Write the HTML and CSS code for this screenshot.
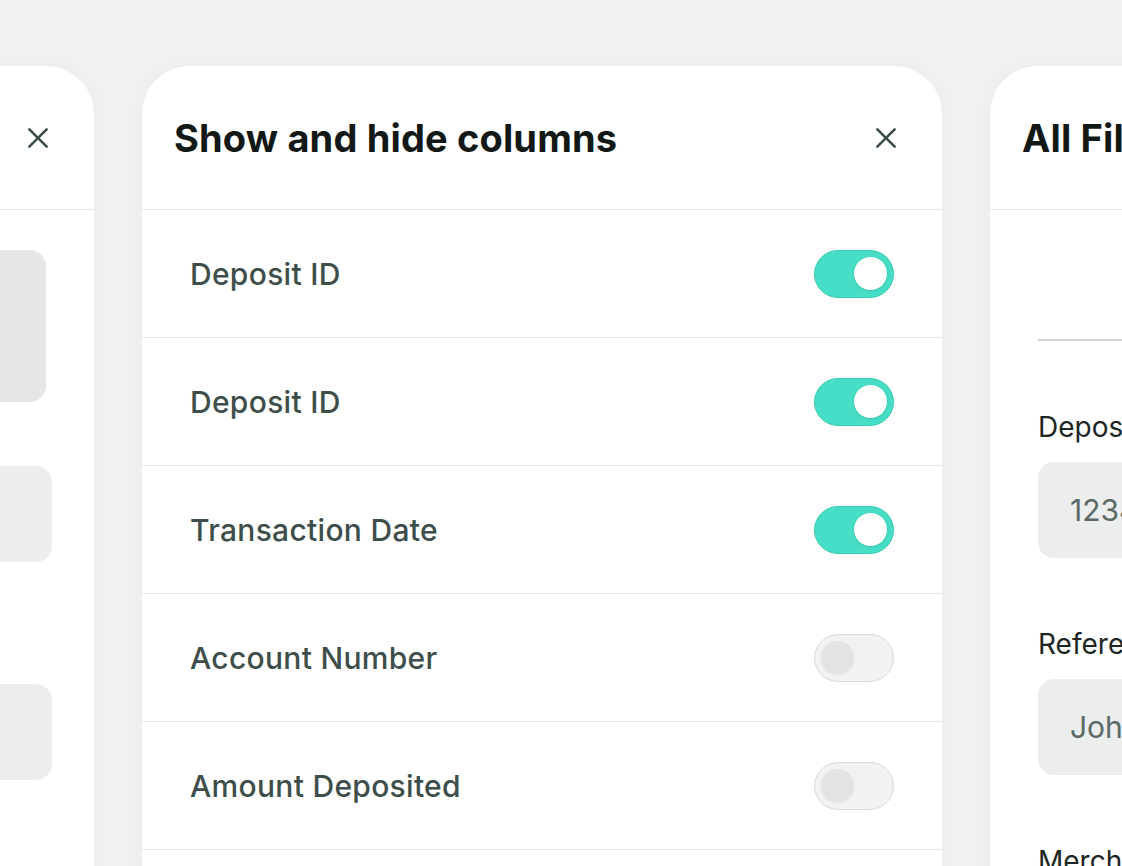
FILE: index.html
```html
<!DOCTYPE html>
<html lang="en">
<head>
<meta charset="utf-8">
<title>Show and hide columns</title>
<link rel="stylesheet" href="styles.css">
</head>
<body>
<div class="stage">
  <section class="panel panel-left">
    <header class="panel-head head-end">
      <button class="close" aria-label="Close">
        <svg viewBox="0 0 24 24" width="26" height="26"><path d="M4 4L20 20M20 4L4 20" /></svg>
      </button>
    </header>
    <div class="left-body">
      <div class="ghost ghost-tall"></div>
      <div class="ghost ghost-mid"></div>
      <div class="ghost ghost-low"></div>
    </div>
  </section>

  <section class="panel panel-main">
    <header class="panel-head">
      <h2 class="title">Show and hide columns</h2>
      <button class="close" aria-label="Close">
        <svg viewBox="0 0 24 24" width="26" height="26"><path d="M4 4L20 20M20 4L4 20" /></svg>
      </button>
    </header>
    <ul class="rows">
      <li class="row"><span class="label">Deposit ID</span><span class="toggle on"><span class="knob"></span></span></li>
      <li class="row"><span class="label">Deposit ID</span><span class="toggle on"><span class="knob"></span></span></li>
      <li class="row"><span class="label">Transaction Date</span><span class="toggle on"><span class="knob"></span></span></li>
      <li class="row"><span class="label">Account Number</span><span class="toggle"><span class="knob"></span></span></li>
      <li class="row"><span class="label">Amount Deposited</span><span class="toggle"><span class="knob"></span></span></li>
      <li class="row"><span class="label">Merchant Name</span><span class="toggle"><span class="knob"></span></span></li>
    </ul>
  </section>

  <section class="panel panel-right">
    <header class="panel-head">
      <h2 class="title">All Filters</h2>
    </header>
    <div class="filters">
      <div class="tabline"></div>
      <div class="field">
        <label class="field-label">Deposit ID</label>
        <div class="input">1234567890</div>
      </div>
      <div class="field">
        <label class="field-label">Reference</label>
        <div class="input">John Doe</div>
      </div>
      <div class="field">
        <label class="field-label">Merchant Name</label>
        <div class="input">Merchant</div>
      </div>
    </div>
  </section>
</div>
</body>
</html>
```

FILE: styles.css
```css
* { box-sizing: border-box; }

html, body {
  margin: 0;
  padding: 0;
  height: 100%;
  overflow: hidden;
}

body {
  background: #f1f2f1;
  font-family: Inter, "Noto Sans", sans-serif;
  color: #3d4e4b;
}

.stage {
  display: flex;
  gap: 48px;
  padding-top: 66px;
  margin-left: -706px;
  width: 2600px;
}

.panel {
  flex: 0 0 800px;
  height: 900px;
  background: #ffffff;
  border-radius: 48px 48px 0 0;
  box-shadow: 0 0 24px rgba(60, 80, 75, 0.05);
}

.panel-head {
  height: 144px;
  display: flex;
  align-items: center;
  justify-content: space-between;
  padding: 0 43px 0 32px;
  border-bottom: 1px solid #e3e6e5;
}

.head-end { justify-content: flex-end; }

.title {
  margin: 0;
  font-size: 38px;
  font-weight: 700;
  letter-spacing: 0.15px;
  color: #121816;
  white-space: nowrap;
}

.close {
  border: 0;
  background: none;
  padding: 0;
  width: 26px;
  height: 26px;
  display: flex;
  cursor: pointer;
}

.close svg path {
  stroke: #3d4e4b;
  stroke-width: 2.4;
  stroke-linecap: round;
  fill: none;
}

/* left (background) panel */
.left-body {
  display: flex;
  flex-direction: column;
  align-items: flex-end;
  padding-top: 40px;
}

.ghost {
  background: #ebeeed;
  border-radius: 16px;
  width: 300px;
}

.ghost-tall {
  height: 152px;
  margin-right: 48px;
  background: #e4e7e6;
}

.ghost-mid {
  height: 96px;
  margin-top: 64px;
  margin-right: 42px;
}

.ghost-low {
  height: 96px;
  margin-top: 122px;
  margin-right: 42px;
}

/* column list */
.rows {
  list-style: none;
  margin: 0;
  padding: 0;
}

.row {
  height: 128px;
  display: flex;
  align-items: center;
  justify-content: space-between;
  padding: 0 48px 0 48px;
  border-bottom: 1px solid #e3e6e5;
}

.label {
  font-size: 30px;
  font-weight: 500;
  color: #3d4e4b;
  letter-spacing: 0.3px;
}

.toggle {
  width: 80px;
  height: 48px;
  border-radius: 24px;
  background: #f1f2f1;
  border: 1.5px solid #d6dad9;
  display: flex;
  align-items: center;
  padding: 0 6px;
}

.knob {
  width: 33px;
  height: 33px;
  border-radius: 50%;
  background: #e1e4e3;
  box-shadow: 0 1px 3px rgba(0, 0, 0, 0.06);
}

.toggle.on {
  background: #46dec6;
  border-color: #3ccab3;
  justify-content: flex-end;
}

.toggle.on .knob {
  background: #ffffff;
  box-shadow: 0 1px 3px rgba(0, 0, 0, 0.12);
}

/* right panel */
.filters {
  padding: 0 0 0 48px;
}

.tabline {
  margin-top: 129px;
  height: 2px;
  background: #cfd4d3;
}

.field {
  display: flex;
  flex-direction: column;
}

.field-label {
  margin-top: 70px;
  font-size: 28px;
  font-weight: 400;
  color: #1d2624;
  line-height: 32px;
  white-space: nowrap;
}

.input {
  margin-top: 19px;
  height: 96px;
  border-radius: 16px;
  background: #ebeeed;
  display: flex;
  align-items: center;
  padding: 0 32px;
  font-size: 30px;
  color: #5b6966;
  white-space: nowrap;
}
```
